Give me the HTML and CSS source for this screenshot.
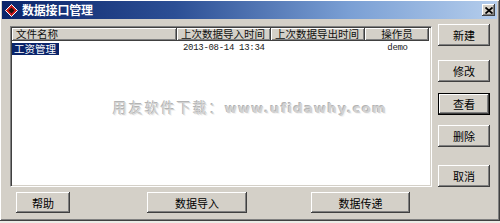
FILE: index.html
```html
<!DOCTYPE html>
<html>
<head>
<meta charset="utf-8">
<link rel="stylesheet" href="styles.css">
</head>
<body>
<div class="win">
  <div class="titlebar">
    <svg class="appicon" width="13" height="13" viewBox="0 0 13 13">
      <polygon points="6.5,0.5 12.5,6.5 6.5,12.5 0.5,6.5" fill="#c81818" stroke="#ffffff" stroke-width="1"/>
      <polygon points="6.5,3.5 9.5,6.5 6.5,9.5 3.5,6.5" fill="#201010"/>
    </svg>
    <span class="title">数据接口管理</span>
    <span class="close">
      <svg width="8" height="7" viewBox="0 0 8 7"><path d="M0.5 0.5 L7.5 6.5 M7.5 0.5 L0.5 6.5" stroke="#000" stroke-width="1.8"/></svg>
    </span>
  </div>
  <div class="main">
    <div class="leftcol">
      <div class="list">
        <div class="hdr">
          <div class="hc c1">文件名称</div>
          <div class="hc c2">上次数据导入时间</div>
          <div class="hc c3">上次数据导出时间</div>
          <div class="hc c4 center">操作员</div>
        </div>
        <div class="row">
          <div class="cell c1"><span class="sel">工资管理</span></div>
          <div class="cell c2 mono">2013-08-14 13:34</div>
          <div class="cell c3"></div>
          <div class="cell c4 center mono">demo</div>
        </div>
        <div class="watermark"><span class="wcn">用友软件下载：</span><span class="wen">www.ufidawhy.com</span></div>
      </div>
      <div class="bottom">
        <button class="btn b-help">帮助</button>
        <button class="btn b-imp">数据导入</button>
        <button class="btn b-send">数据传递</button>
      </div>
    </div>
    <div class="rightcol">
      <button class="btn rb r1">新建</button>
      <button class="btn rb r2">修改</button>
      <button class="btn rb r3 default">查看</button>
      <button class="btn rb r4">删除</button>
      <button class="btn rb r5">取消</button>
    </div>
  </div>
</div>
</body>
</html>
```
FILE: styles.css
```css
html, body {
  margin: 0;
  padding: 0;
  background: #ecebe6;
}
body {
  width: 500px;
  height: 223px;
  overflow: hidden;
  font-family: "Noto Sans CJK SC", "DejaVu Sans", sans-serif;
  font-size: 11px;
  color: #000;
}
.win {
  width: 500px;
  height: 221px;
  box-sizing: border-box;
  background: #d4d0c8;
  border-right: 1px solid #404040;
  border-bottom: 1px solid #404040;
  box-shadow: inset 1px 1px #ffffff, inset -1px -1px #808080;
  padding: 1px 2px 0 2px;
}
.titlebar {
  height: 18px;
  display: flex;
  align-items: center;
  background: linear-gradient(to right, #0a246a 0%, #2c4f95 35%, #7a9fd4 70%, #b4cdec 100%);
  padding-left: 3px;
}
.appicon {
  display: block;
  flex: none;
}
.title {
  margin-left: 4px;
  color: #fff;
  font-weight: bold;
  font-size: 12px;
  letter-spacing: -0.2px;
  line-height: 18px;
}
.close {
  margin-left: auto;
  margin-right: 2px;
  width: 13px;
  height: 12px;
  box-sizing: border-box;
  background: #d4d0c8;
  box-shadow: inset -1px -1px #404040, inset 1px 1px #fff, inset -2px -2px #808080;
  display: flex;
  align-items: center;
  justify-content: center;
}
.close svg { display: block; }
.main {
  display: flex;
  padding: 5px 0 0 8px;
}
.leftcol {
  width: 422px;
  display: flex;
  flex-direction: column;
}
.list {
  position: relative;
  margin-top: 2px;
  height: 161px;
  box-sizing: border-box;
  background: #fff;
  border-style: solid;
  border-width: 1px;
  border-color: #808080 #ffffff #ffffff #808080;
  box-shadow: inset 1px 1px #404040, inset -1px -1px #d4d0c8;
  padding: 1px;
  overflow: hidden;
}
.hdr, .row {
  display: flex;
}
.hc {
  height: 13px;
  box-sizing: border-box;
  background: #d4d0c8;
  box-shadow: inset -1px -1px #404040, inset 1px 1px #fff, inset -2px -2px #808080;
  font-size: 10.5px;
  line-height: 12px;
  padding-left: 4px;
  white-space: nowrap;
  color: #101010;
}
.c1 { width: 165px; }
.c2 { width: 94px; }
.c3 { width: 94px; }
.c4 { width: 64px; }
.center { text-align: center; padding-left: 0; }
.row {
  height: 12px;
  line-height: 12px;
  margin-top: 1px;
}
.cell {
  box-sizing: border-box;
  white-space: nowrap;
  padding-left: 6px;
}
.cell.c1 { padding-left: 0; }
.sel {
  display: inline-block;
  background: #0a246a;
  color: #fff;
  padding: 0 3px 0 2px;
  height: 12px;
  line-height: 12px;
  font-size: 10.5px;
}
.mono {
  font-family: "Liberation Mono", "DejaVu Sans Mono", monospace;
  font-size: 9px;
  letter-spacing: -0.3px;
  color: #202020;
}
.cell.c4.mono { padding-left: 1px; }
.watermark {
  position: absolute;
  left: 102px;
  top: 70px;
  white-space: nowrap;
  color: #d2d2d2;
  text-shadow: -1px -1px 0 #b4b4b4, 1px 1px 0 #f4f4f4;
}
.wcn {
  font-size: 14px;
  letter-spacing: 2px;
}
.wen {
  font-family: "DejaVu Sans", sans-serif;
  font-weight: bold;
  font-size: 13px;
  letter-spacing: 1.3px;
}
.btn {
  display: flex;
  align-items: center;
  justify-content: center;
  box-sizing: border-box;
  margin: 0;
  padding: 0;
  border: none;
  background: #d4d0c8;
  box-shadow: inset -1px -1px #404040, inset 1px 1px #fff, inset -2px -2px #808080, inset 2px 2px #d4d0c8;
  font-family: "Noto Sans CJK SC", sans-serif;
  font-size: 11px;
  color: #000;
}
.bottom {
  display: flex;
  margin-top: 5px;
}
.bottom .btn { height: 21px; }
.b-help { width: 54px; margin-left: 6px; }
.b-imp { width: 100px; margin-left: 77px; }
.b-send { width: 99px; margin-left: 64px; }
.rightcol {
  display: flex;
  flex-direction: column;
  margin-left: 6px;
  width: 52px;
}
.rb { height: 22px; width: 52px; }
.r2 { margin-top: 14px; }
.r3 { margin-top: 11px; }
.r4 { margin-top: 10px; }
.r5 { margin-top: 18px; }
.default {
  box-shadow: inset 0 0 0 1px #000, inset -2px -2px #404040, inset 2px 2px #fff, inset -3px -3px #808080;
}
```
